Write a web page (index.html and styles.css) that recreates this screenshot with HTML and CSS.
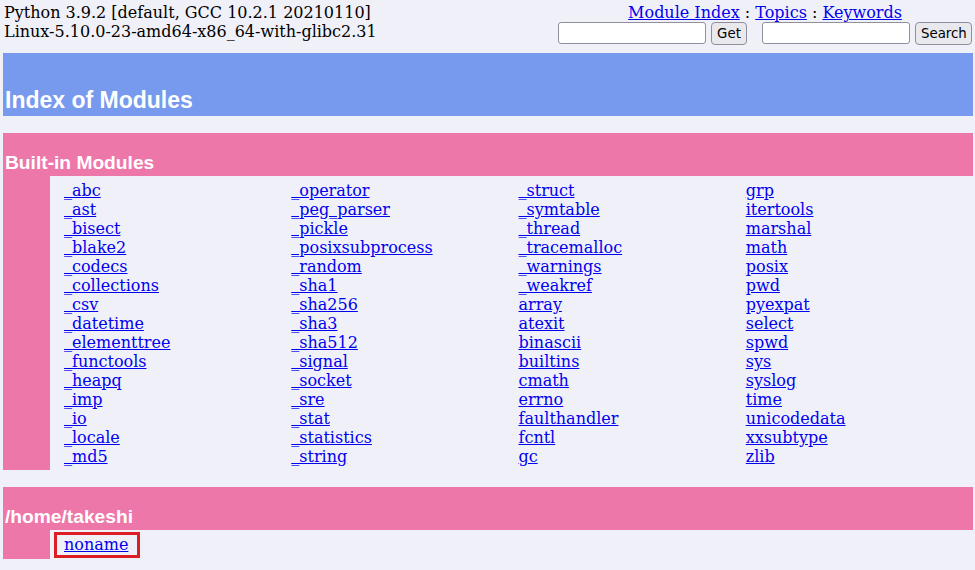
FILE: index.html
```html
<!DOCTYPE html>
<html>
<head>
<meta charset="utf-8">
<title>Pydoc: Index of Modules</title>
<link rel="stylesheet" href="styles.css">
</head>
<body>
<div class="page">
  <header class="topbar">
    <div class="sysinfo">Python 3.9.2 [default, GCC 10.2.1 20210110]<br>Linux-5.10.0-23-amd64-x86_64-with-glibc2.31</div>
    <div class="nav">
      <div class="navlinks"><a href="#">Module Index</a> : <a href="#">Topics</a> : <a href="#">Keywords</a></div>
      <div class="forms">
        <form class="f f-get"><input type="text" class="key" name="key"><button type="button" class="btn btn-get">Get</button></form>
        <form class="f f-search"><input type="text" class="key" name="key"><button type="button" class="btn btn-search">Search</button></form>
      </div>
    </div>
  </header>

  <div class="heading"><h1>Index of Modules</h1></div>

  <section class="section">
    <div class="sec-title"><h2>Built-in Modules</h2></div>
    <div class="sec-body">
      <div class="margin"></div>
      <div class="cols">
        <div class="col">
          <a href="#">_abc</a><a href="#">_ast</a><a href="#">_bisect</a><a href="#">_blake2</a><a href="#">_codecs</a><a href="#">_collections</a><a href="#">_csv</a><a href="#">_datetime</a><a href="#">_elementtree</a><a href="#">_functools</a><a href="#">_heapq</a><a href="#">_imp</a><a href="#">_io</a><a href="#">_locale</a><a href="#">_md5</a>
        </div>
        <div class="col">
          <a href="#">_operator</a><a href="#">_peg_parser</a><a href="#">_pickle</a><a href="#">_posixsubprocess</a><a href="#">_random</a><a href="#">_sha1</a><a href="#">_sha256</a><a href="#">_sha3</a><a href="#">_sha512</a><a href="#">_signal</a><a href="#">_socket</a><a href="#">_sre</a><a href="#">_stat</a><a href="#">_statistics</a><a href="#">_string</a>
        </div>
        <div class="col">
          <a href="#">_struct</a><a href="#">_symtable</a><a href="#">_thread</a><a href="#">_tracemalloc</a><a href="#">_warnings</a><a href="#">_weakref</a><a href="#">array</a><a href="#">atexit</a><a href="#">binascii</a><a href="#">builtins</a><a href="#">cmath</a><a href="#">errno</a><a href="#">faulthandler</a><a href="#">fcntl</a><a href="#">gc</a>
        </div>
        <div class="col">
          <a href="#">grp</a><a href="#">itertools</a><a href="#">marshal</a><a href="#">math</a><a href="#">posix</a><a href="#">pwd</a><a href="#">pyexpat</a><a href="#">select</a><a href="#">spwd</a><a href="#">sys</a><a href="#">syslog</a><a href="#">time</a><a href="#">unicodedata</a><a href="#">xxsubtype</a><a href="#">zlib</a>
        </div>
      </div>
    </div>
  </section>

  <section class="section">
    <div class="sec-title"><h2>/home/takeshi</h2></div>
    <div class="sec-body">
      <div class="margin"></div>
      <div class="cols cols-single">
        <div class="col">
          <span class="current"><a href="#">noname</a></span>
        </div>
      </div>
    </div>
  </section>
</div>
</body>
</html>
```

FILE: styles.css
```css
html, body {
  margin: 0;
}

body {
  background: #f0f0f8;
  color: #000;
  font-family: "DejaVu Serif", serif;
  font-size: 16px;
}

a {
  color: #0000ee;
}

.page {
  padding: 3px 2px 0 3px;
}

.topbar {
  display: flex;
  justify-content: space-between;
  align-items: flex-start;
  line-height: 19px;
}

.sysinfo {
  padding-left: 1px;
}

.nav {
  margin-right: 1px;
}

.navlinks {
  text-align: center;
}

.forms {
  display: flex;
  height: 23px;
}

.f {
  display: flex;
  align-items: flex-start;
  gap: 5px;
  margin: 0;
}

.f-get {
  margin-right: 15px;
}

.key {
  box-sizing: border-box;
  width: 148px;
  height: 22px;
  margin: 0;
  padding: 1px 3px;
  border: 1px solid #8f8f9d;
  border-radius: 3px;
  background: #fff;
  font-family: "DejaVu Sans", sans-serif;
  font-size: 13px;
}

.btn {
  box-sizing: border-box;
  height: 23px;
  margin: 0;
  padding: 0 5px;
  border: 1px solid #8f8f9d;
  border-radius: 4px;
  background: #e9e9ed;
  color: #000;
  font-family: "DejaVu Sans", sans-serif;
  font-size: 13.33px;
}

.btn-get {
  width: 36px;
}

.btn-search {
  width: 57px;
}

.heading {
  box-sizing: border-box;
  height: 63px;
  margin-top: 8px;
  padding: 2px;
  display: flex;
  align-items: flex-end;
  background: #7799ee;
}

.heading h1 {
  margin: 0;
  color: #fff;
  font-family: "Liberation Sans", Arial, sans-serif;
  font-size: 23px;
  font-weight: bold;
  line-height: normal;
}

.section {
  margin-top: 17px;
}

.sec-title {
  box-sizing: border-box;
  height: 43px;
  padding: 2px;
  display: flex;
  align-items: flex-end;
  background: #ee77aa;
}

.sec-title h2 {
  margin: 0;
  color: #fff;
  font-family: "Liberation Sans", Arial, sans-serif;
  font-size: 19.2px;
  font-weight: bold;
  line-height: normal;
}

.sec-body {
  display: flex;
}

.margin {
  width: 47px;
  flex: none;
  background: #ee77aa;
}

.cols {
  flex: 1;
  display: grid;
  grid-template-columns: repeat(4, 1fr);
  padding: 5px 0 4px 14px;
  line-height: 19px;
}

.cols-single {
  padding-bottom: 1px;
}

.col {
  display: flex;
  flex-direction: column;
  align-items: flex-start;
}

.current {
  display: block;
  margin: -3px 0 0 -10px;
  padding: 0 9px 1px 7px;
  border: 3px solid #dc1e24;
}
```
